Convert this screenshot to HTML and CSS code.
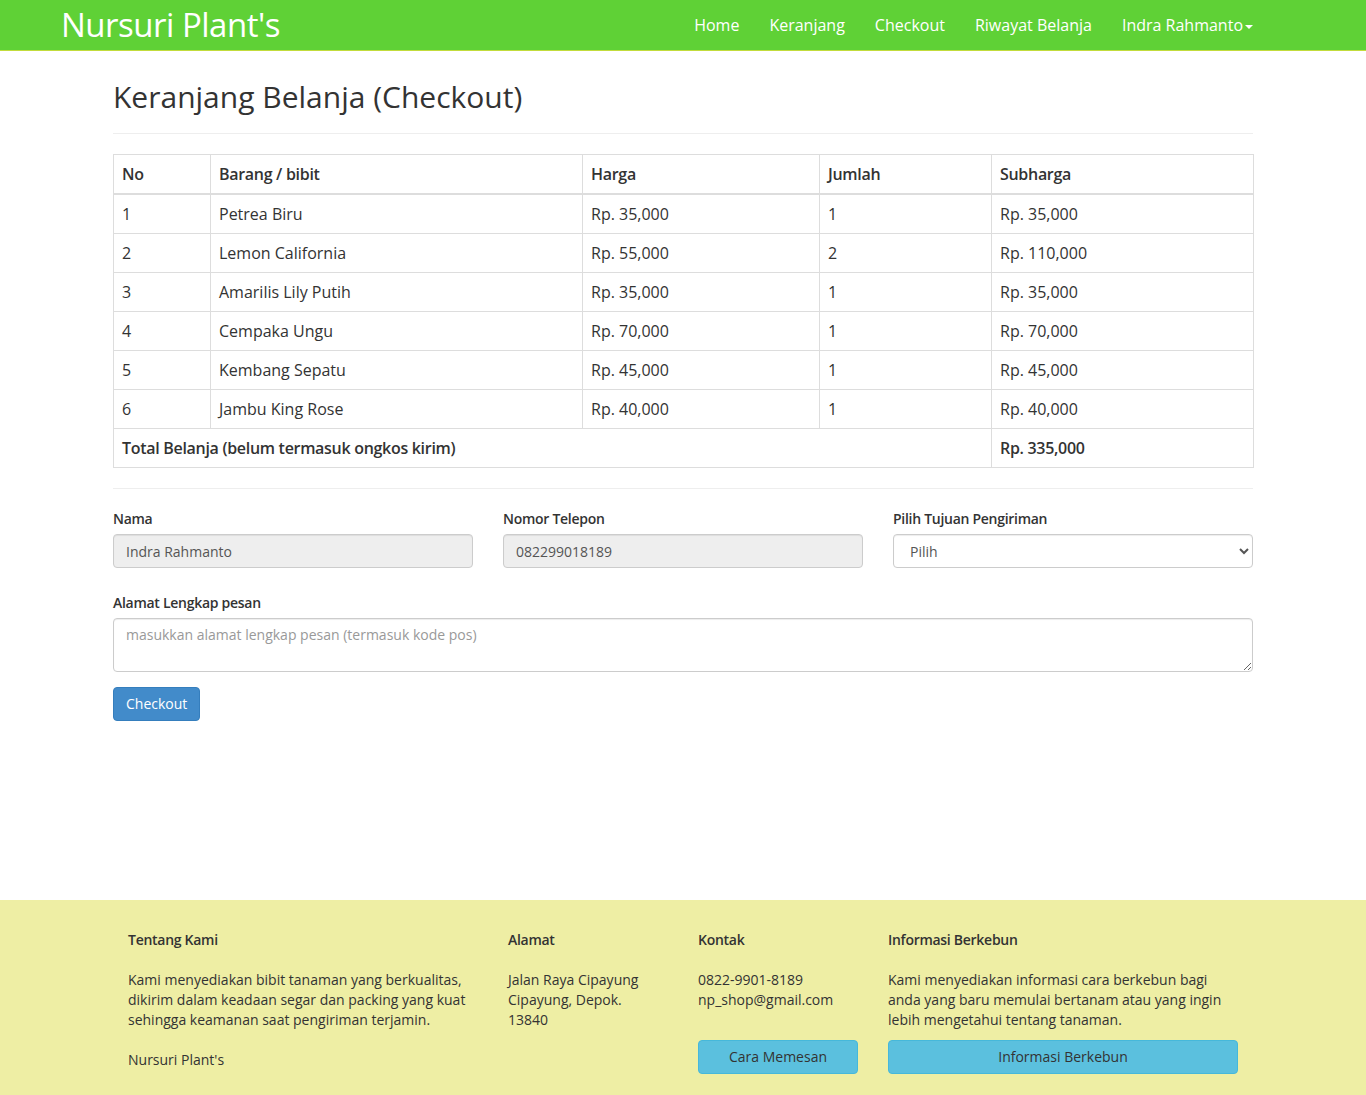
FILE: index.html
```html
<!DOCTYPE html>
<html lang="id">
<head>
<meta charset="utf-8">
<title>Nursuri Plant's - Checkout</title>
<link rel="stylesheet" href="styles.css">
</head>
<body>
<nav class="navbar">
  <a class="brand" href="#">Nursuri Plant's</a>
  <ul class="nav">
    <li><a href="#">Home</a></li>
    <li><a href="#">Keranjang</a></li>
    <li><a href="#">Checkout</a></li>
    <li><a href="#">Riwayat Belanja</a></li>
    <li><a href="#">Indra Rahmanto<span class="caret"></span></a></li>
  </ul>
</nav>

<main class="container">
  <div class="page-header">
    <h1>Keranjang Belanja (Checkout)</h1>
  </div>

  <table class="table">
    <colgroup>
      <col class="c1"><col class="c2"><col class="c3"><col class="c4"><col class="c5">
    </colgroup>
    <thead>
      <tr><th>No</th><th>Barang / bibit</th><th>Harga</th><th>Jumlah</th><th>Subharga</th></tr>
    </thead>
    <tbody>
      <tr><td>1</td><td>Petrea Biru</td><td>Rp. 35,000</td><td>1</td><td>Rp. 35,000</td></tr>
      <tr><td>2</td><td>Lemon California</td><td>Rp. 55,000</td><td>2</td><td>Rp. 110,000</td></tr>
      <tr><td>3</td><td>Amarilis Lily Putih</td><td>Rp. 35,000</td><td>1</td><td>Rp. 35,000</td></tr>
      <tr><td>4</td><td>Cempaka Ungu</td><td>Rp. 70,000</td><td>1</td><td>Rp. 70,000</td></tr>
      <tr><td>5</td><td>Kembang Sepatu</td><td>Rp. 45,000</td><td>1</td><td>Rp. 45,000</td></tr>
      <tr><td>6</td><td>Jambu King Rose</td><td>Rp. 40,000</td><td>1</td><td>Rp. 40,000</td></tr>
      <tr class="total"><th colspan="4">Total Belanja (belum termasuk ongkos kirim)</th><th>Rp. 335,000</th></tr>
    </tbody>
  </table>

  <hr class="sep">

  <form class="form">
    <div class="row first-row">
      <div class="col">
        <label>Nama</label>
        <input class="form-control" type="text" value="Indra Rahmanto" readonly>
      </div>
      <div class="col">
        <label>Nomor Telepon</label>
        <input class="form-control" type="text" value="082299018189" readonly>
      </div>
      <div class="col">
        <label>Pilih Tujuan Pengiriman</label>
        <select class="form-control select">
          <option>Pilih</option>
        </select>
      </div>
    </div>
    <div class="group">
      <label>Alamat Lengkap pesan</label>
      <textarea class="form-control area" rows="2" placeholder="masukkan alamat lengkap pesan (termasuk kode pos)"></textarea>
    </div>
    <button type="button" class="btn btn-primary">Checkout</button>
  </form>
</main>

<footer class="footer">
  <div class="footer-inner">
    <div class="fcol wide">
      <h4>Tentang Kami</h4>
      <p>Kami menyediakan bibit tanaman yang berkualitas, dikirim dalam keadaan segar dan packing yang kuat sehingga keamanan saat pengiriman terjamin.</p>
      <p class="sign">Nursuri Plant's</p>
    </div>
    <div class="fcol narrow">
      <h4>Alamat</h4>
      <p>Jalan Raya Cipayung<br>Cipayung, Depok.<br>13840</p>
    </div>
    <div class="fcol narrow">
      <h4>Kontak</h4>
      <p>0822-9901-8189<br>np_shop@gmail.com<br>&nbsp;</p>
      <a class="btn btn-info" href="#">Cara Memesan</a>
    </div>
    <div class="fcol wide">
      <h4>Informasi Berkebun</h4>
      <p>Kami menyediakan informasi cara berkebun bagi anda yang baru memulai bertanam atau yang ingin lebih mengetahui tentang tanaman.</p>
      <a class="btn btn-info" href="#">Informasi Berkebun</a>
    </div>
  </div>
</footer>
</body>
</html>
```
FILE: styles.css
```css
* { box-sizing: border-box; }
html, body { margin: 0; padding: 0; }
body {
  font-family: "Open Sans", "Noto Sans", sans-serif;
  font-size: 14px;
  line-height: 1.42857;
  color: #333;
  background: #fff;
  min-height: 1095px;
  display: flex;
  flex-direction: column;
}

/* Navbar */
.navbar {
  height: 51px;
  background: #5fd136;
  border-bottom: 1px solid #c2dc3c;
  display: flex;
  align-items: center;
  justify-content: space-between;
  padding: 0 113px 0 61px;
}
.brand {
  color: #fff;
  text-decoration: none;
  font-size: 33px;
  line-height: 50px;
  letter-spacing: -0.5px;
}
.nav {
  list-style: none;
  margin: 0 -15px 0 0;
  padding: 0;
  display: flex;
}
.nav a {
  display: block;
  padding: 14px 15px;
  color: #fff;
  text-decoration: none;
  font-size: 16px;
  line-height: 22px;
}
.caret {
  display: inline-block;
  width: 0;
  height: 0;
  margin-left: 2px;
  vertical-align: middle;
  border-top: 4px solid #fff;
  border-left: 4px solid transparent;
  border-right: 4px solid transparent;
}

/* Main */
.container {
  width: 1140px;
  margin: 0 auto;
  flex: 1;
}
.page-header {
  margin: 24px 0 20px;
  padding-bottom: 14px;
  border-bottom: 1px solid #eee;
}
.page-header h1 {
  margin: 0;
  font-size: 30px;
  font-weight: 400;
  line-height: 44px;
  color: #333;
}

.table {
  width: 100%;
  border-collapse: collapse;
  border-spacing: 0;
  font-size: 16px;
  margin-bottom: 20px;
  table-layout: fixed;
}
.c1 { width: 97px; }
.c2 { width: 372px; }
.c3 { width: 237px; }
.c4 { width: 172px; }
.c5 { width: 262px; }
.table th, .table td {
  border: 1px solid #ddd;
  padding: 8px;
  line-height: 22px;
  text-align: left;
  vertical-align: top;
}
.table th { font-weight: 600; letter-spacing: -0.3px; }
.table thead th { border-bottom: 2px solid #ddd; }

.sep {
  border: 0;
  border-top: 1px solid #eee;
  margin: 0 0 20px;
}

.row {
  display: flex;
  gap: 30px;
}
.col { flex: 1; }
.first-row { margin-bottom: 25px; }
label {
  display: block;
  font-weight: 600;
  letter-spacing: -0.28px;
  margin-bottom: 5px;
  line-height: 20px;
}
.form-control {
  display: block;
  width: 100%;
  height: 34px;
  padding: 6px 12px;
  font-family: inherit;
  font-size: 14px;
  line-height: 20px;
  color: #555;
  background: #fff;
  border: 1px solid #ccc;
  border-radius: 4px;
  box-shadow: inset 0 1px 1px rgba(0,0,0,.075);
}
.form-control[readonly] { background: #eee; }
.select { padding-left: 12px; }
.area {
  height: 54px;
  resize: vertical;
}
.area::placeholder { color: #999; }
.group { margin-bottom: 15px; }

.btn {
  display: inline-block;
  padding: 6px 12px;
  font-family: inherit;
  font-size: 14px;
  line-height: 20px;
  border: 1px solid transparent;
  border-radius: 4px;
  text-align: center;
  text-decoration: none;
  cursor: pointer;
}
.btn-primary {
  background: #428bca;
  border-color: #357ebd;
  color: #fff;
}
.btn-info {
  display: block;
  background: #5bc0de;
  border-color: #46b8da;
  color: #333;
}

/* Footer */
.footer {
  background: #eeeea4;
  padding: 30px 0 15px;
}
.footer-inner {
  width: 1140px;
  margin: 0 auto;
  display: flex;
}
.fcol { padding: 0 15px; }
.fcol.wide { width: 380px; }
.fcol.narrow { width: 190px; }
.fcol h4 {
  margin: 0 0 20px;
  font-size: 14px;
  font-weight: 600;
  letter-spacing: -0.28px;
  line-height: 20px;
}
.fcol p { margin: 0 0 10px; }
.fcol p.sign { margin-top: 20px; }
```
